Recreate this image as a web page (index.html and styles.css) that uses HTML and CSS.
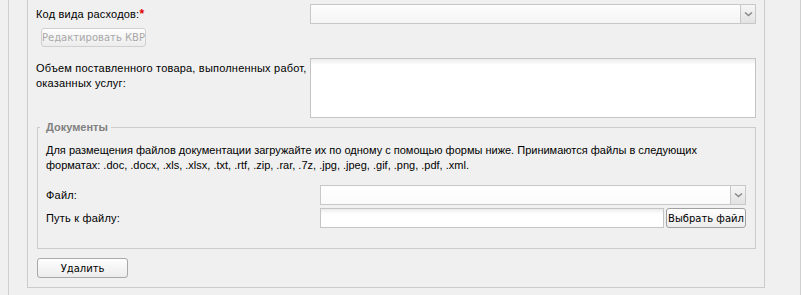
FILE: index.html
```html
<!DOCTYPE html>
<html lang="ru">
  <head>
    <meta charset="UTF-8" />
    <title>Документы</title>
    <link rel="stylesheet" href="styles.css">
  </head>
  <body>
    <div class="frame">
      <div class="box">
        <div class="row row-kvr">
          <label class="label">Код вида расходов:<span class="req">*</span></label>
          <div class="select">
            <span class="select-value"></span>
            <span class="select-arrow">
              <svg width="9" height="6" viewBox="0 0 9 6"><path d="M1 1.5 L4.5 4.5 L8 1.5" fill="none" stroke="#8a8a8a" stroke-width="1.6"/></svg>
            </span>
          </div>
        </div>
        <button class="btn btn-disabled btn-kvr" disabled>Редактировать КВР</button>

        <div class="row row-volume">
          <label class="label label-top">Объем поставленного товара, выполненных работ,<br>оказанных услуг:</label>
          <textarea class="textarea"></textarea>
        </div>

        <fieldset class="docs">
          <legend>Документы</legend>
          <p class="hint">
            Для размещения файлов документации загружайте их по одному с помощью формы ниже. Принимаются файлы в следующих
            форматах: .doc, .docx, .xls, .xlsx, .txt, .rtf, .zip, .rar, .7z, .jpg, .jpeg, .gif, .png, .pdf, .xml.
          </p>
          <div class="row row-file">
            <label class="label">Файл:</label>
            <div class="select">
              <span class="select-value select-white"></span>
              <span class="select-arrow">
                <svg width="9" height="6" viewBox="0 0 9 6"><path d="M1 1.5 L4.5 4.5 L8 1.5" fill="none" stroke="#8a8a8a" stroke-width="1.6"/></svg>
              </span>
            </div>
          </div>
          <div class="row row-path">
            <label class="label">Путь к файлу:</label>
            <div class="path">
              <input class="input" type="text" />
              <button class="btn btn-pick">Выбрать файл</button>
            </div>
          </div>
        </fieldset>

        <button class="btn btn-delete">Удалить</button>
      </div>
    </div>
  </body>
</html>
```

FILE: styles.css
```css
html, body {
  margin: 0;
  padding: 0;
  height: 295px;
  background-color: #f0f0f0;
  overflow: hidden;
}

body {
  font-family: "Liberation Sans", Arial, sans-serif;
  font-size: 11px;
  color: #000;
  display: flex;
}

.frame {
  margin-left: 8px;
  width: 756px;
  height: 295px;
  padding: 0 18px;
  border-left: 1px solid #cfcfcf;
  border-right: 1px solid #cfcfcf;
  box-sizing: content-box;
  display: flex;
  align-items: flex-start;
  /* second rule on the right */
  box-shadow: 9px 0 0 -1px #f0f0f0, 10px 0 0 0 #d6d6d6;
}

.box {
  width: 736px;
  padding: 4px 0 9px 0;
  border-left: 1px solid #cbcbcb;
  border-right: 1px solid #cbcbcb;
  border-bottom: 1px solid #cbcbcb;
}

.row {
  display: flex;
  align-items: center;
}

.label {
  width: 274px;
  padding-left: 8px;
  line-height: 15px;
  flex-shrink: 0;
  letter-spacing: 0.2px;
  white-space: nowrap;
}

.label-top {
  align-self: flex-start;
  padding-top: 3px;
}

.req {
  color: #e00000;
  font-weight: bold;
  font-size: 12px;
}

.select {
  display: flex;
  width: 446px;
  height: 20px;
  box-sizing: border-box;
}

.select-value {
  flex: 1;
  border: 1px solid #c8c8c8;
  border-right: none;
  background: linear-gradient(#fdfdfd, #f4f4f4);
}

.select-white {
  background: linear-gradient(#ffffff, #fafafa);
}

.select-arrow {
  width: 16px;
  display: flex;
  align-items: center;
  justify-content: center;
  border: 1px solid #c8c8c8;
  background: linear-gradient(#f6f6f6, #e2e2e2);
  box-sizing: border-box;
}

.btn {
  font-family: "DejaVu Sans", Verdana, sans-serif;
  font-size: 10px;
  height: 20px;
  padding: 0;
  border-radius: 3px;
  background: linear-gradient(#fefefe, #ececec);
  cursor: pointer;
  box-sizing: border-box;
  white-space: nowrap;
}

.btn-disabled {
  color: #a8a8a8;
  border: 1px solid #d0d0d0;
  cursor: default;
}

.btn-kvr {
  display: block;
  width: 105px;
  height: 19px;
  margin: 4px 0 0 13px;
}

.row-volume {
  margin-top: 11px;
}

.textarea {
  width: 446px;
  height: 60px;
  margin: 0;
  border: 1px solid #c4c4c4;
  background: linear-gradient(#ececec, #ffffff 6px);
  resize: none;
  box-sizing: border-box;
}

.docs {
  margin: 2px 8px 0 9px;
  padding: 0 9px 20px 8px;
  border: 1px solid #cccccc;
  min-width: 0;
}

.docs legend {
  margin-left: -6px;
  padding: 0 3px 0 6px;
  font-weight: bold;
  color: #808080;
  line-height: 14px;
}

.hint {
  margin: 9px 0 0 0;
  line-height: 15px;
}

.row-file {
  margin-top: 12px;
}

.row-path {
  margin-top: 3px;
}

.docs .label {
  width: 274px;
  padding-left: 0;
}

.docs .select {
  width: 426px;
}

.path {
  display: flex;
  width: 426px;
  gap: 2px;
}

.input {
  width: 344px;
  height: 20px;
  margin: 0;
  border: 1px solid #c4c4c4;
  background: linear-gradient(#ececec, #ffffff 5px);
  box-sizing: border-box;
}

.btn-pick {
  width: 80px;
  color: #000;
  border: 1px solid #a0a0a0;
}

.btn-delete {
  display: block;
  width: 91px;
  margin: 9px 0 0 9px;
  color: #000;
  border: 1px solid #a8a8a8;
}
```
